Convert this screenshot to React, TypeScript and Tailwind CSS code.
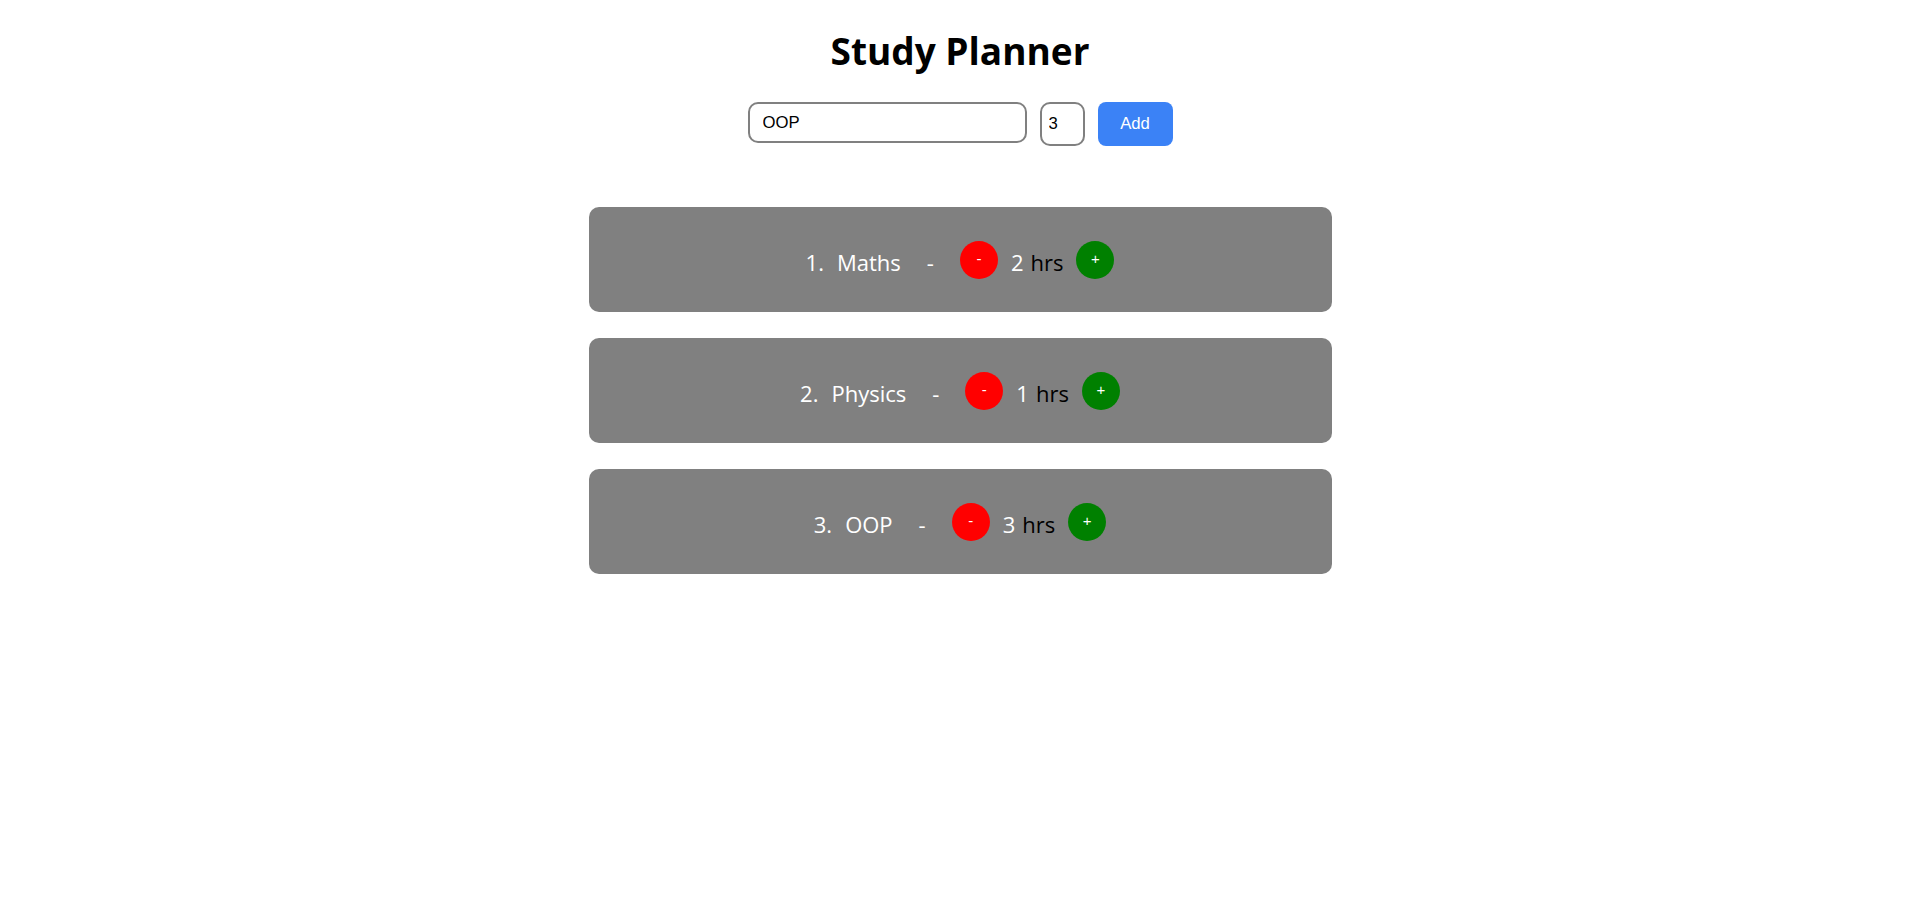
import { useState } from "react";

type Subject = { name: string; hours: number };

const INITIAL: Subject[] = [
  { name: "Maths", hours: 2 },
  { name: "Physics", hours: 1 },
  { name: "OOP", hours: 3 },
];

export default function App() {
  const [subjects, setSubjects] = useState<Subject[]>(INITIAL);
  const [name, setName] = useState("OOP");
  const [hours, setHours] = useState("3");

  const change = (idx: number, delta: number) => {
    setSubjects((prev) =>
      prev.map((s, i) => (i === idx ? { ...s, hours: Math.max(0, s.hours + delta) } : s))
    );
  };

  const add = () => {
    if (!name.trim()) return;
    setSubjects((prev) => [...prev, { name: name.trim(), hours: Number(hours) || 0 }]);
  };

  return (
    <div className="min-h-screen bg-white flex flex-col items-center font-['Open_Sans',sans-serif]">
      <h1 className="pt-[32px] text-[37px] leading-none font-bold text-black">Study Planner</h1>

      <div className="mt-[33px] flex items-start font-['Liberation_Sans',Arial,sans-serif] text-[16.7px]">
        <input
          value={name}
          onChange={(e) => setName(e.target.value)}
          className="w-[279px] h-[41px] border-2 border-[#808080] rounded-[10px] px-[13px] outline-none text-black"
        />
        <input
          type="number"
          value={hours}
          onChange={(e) => setHours(e.target.value)}
          className="ml-[13px] w-[45px] h-[44px] border-2 border-[#808080] rounded-[10px] px-[7px] outline-none text-black [appearance:textfield]"
        />
        <button
          onClick={add}
          className="ml-[13px] w-[75px] h-[44px] rounded-[8px] bg-[#3b82f6] text-white"
        >
          Add
        </button>
      </div>

      <div className="mt-[61px] flex flex-col gap-[26px]">
        {subjects.map((s, i) => (
          <div
            key={i}
            className="w-[743px] h-[105px] bg-[#808080] rounded-[10px] flex items-center justify-center text-[22px] text-white"
          >
            <span className="mt-[6px]">{i + 1}.</span>
            <span className="mt-[6px] ml-[13px]">{s.name}</span>
            <span className="mt-[6px] ml-[26px]">-</span>
            <button
              onClick={() => change(i, -1)}
              className="ml-[26px] w-[38px] h-[38px] rounded-full bg-[#ff0000] text-white text-[15px] font-['Liberation_Sans',Arial,sans-serif] flex items-center justify-center"
            >
              -
            </button>
            <span className="mt-[6px] ml-[13px]">{s.hours}</span>
            <span className="mt-[6px] ml-[7px] text-black">hrs</span>
            <button
              onClick={() => change(i, 1)}
              className="ml-[13px] w-[38px] h-[38px] rounded-full bg-[#008000] text-white text-[15px] font-['Liberation_Sans',Arial,sans-serif] flex items-center justify-center"
            >
              +
            </button>
          </div>
        ))}
      </div>
    </div>
  );
}
